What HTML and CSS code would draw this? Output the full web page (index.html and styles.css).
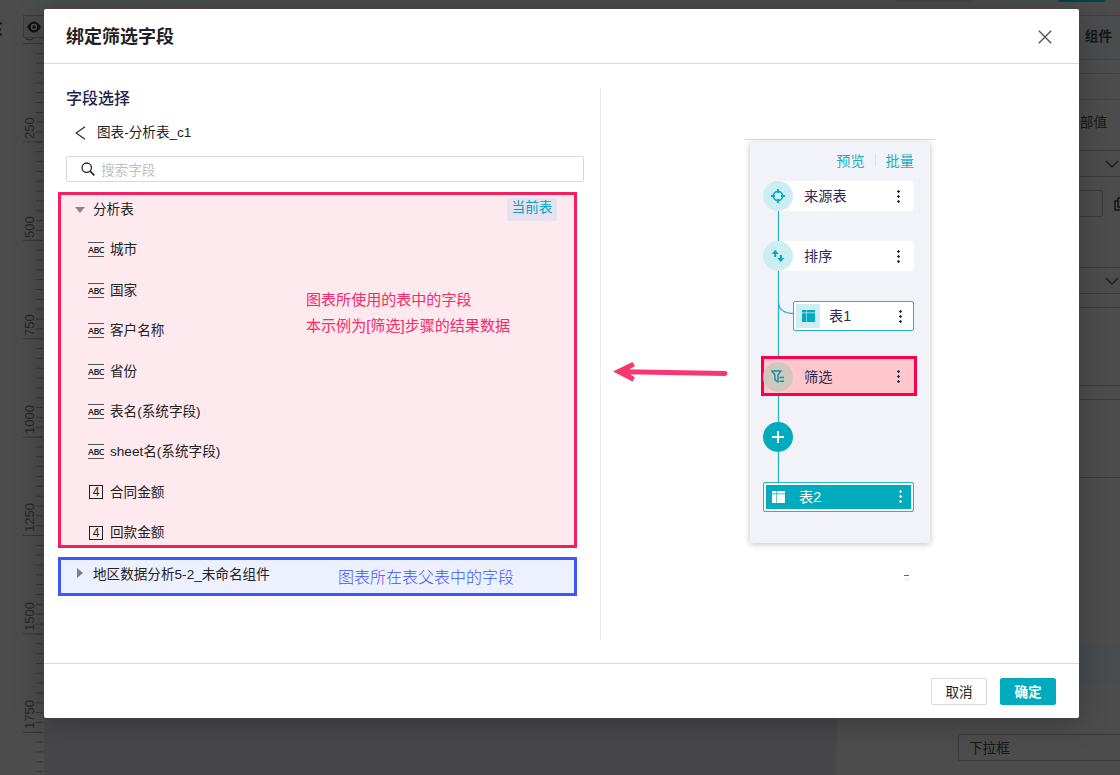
FILE: index.html
```
<!DOCTYPE html>
<html lang="zh-CN">
<head>
<meta charset="UTF-8">
<meta name="viewport" content="width=device-width, initial-scale=1.0">
<title>绑定筛选字段</title>
<link rel="stylesheet" href="styles.css">
</head>
<body>
    <!-- Editor page behind the dialog -->
    <div class="page">
        <div class="toolbar">
            <span class="tool t1"></span>
            <span class="tool t2"></span>
            <span class="tool t3"></span>
            <span class="tool t4"></span>
            <span class="tool t5"></span>
            <span class="tool t6"></span>
        </div>
        <div class="workspace">
            <svg class="ruler" width="44" height="760" viewBox="0 15 44 760">
                <defs>
                    <pattern id="minor" x="0" y="43" width="44" height="9.84" patternUnits="userSpaceOnUse">
                        <path d="M36 0.5H43" stroke="#353535"/>
                    </pattern>
                    <pattern id="major" x="0" y="43" width="44" height="98.4" patternUnits="userSpaceOnUse">
                        <path d="M23 0.5H43" stroke="#353535"/>
                    </pattern>
                </defs>
                <rect x="0" y="43" width="44" height="732" fill="url(#minor)"/>
                <rect x="0" y="43" width="44" height="732" fill="url(#major)"/>
                <g class="ruler-text">
                    <text transform="translate(34 139) rotate(-90)">250</text>
                    <text transform="translate(34 238) rotate(-90)">500</text>
                    <text transform="translate(34 336) rotate(-90)">750</text>
                    <text transform="translate(34 434) rotate(-90)">1000</text>
                    <text transform="translate(34 532) rotate(-90)">1250</text>
                    <text transform="translate(34 631) rotate(-90)">1500</text>
                    <text transform="translate(34 729) rotate(-90)">1750</text>
                </g>
                <path d="M25.500 38.500q3.500 3 8 0" fill="none" stroke="#222"/>
                <rect x="23.500" y="15.500" width="24" height="22" fill="#4a4a4a" stroke="#3b3b3b"/>
                <path d="M27 27q7-11 14 0q-7 11-14 0z" fill="#111"/>
                <circle cx="34" cy="27" r="2.500" fill="none" stroke="#555" stroke-width="1.300"/>
                <path d="M0 23.500H2M0 29.500H1M0 34.500H2" stroke="#12122a" stroke-width="2"/>
            </svg>
            <div class="canvas"></div>
            <div class="panel">
                <div class="panel-title">组件</div>
                <div class="panel-line"></div>
                <div class="panel-line short"></div>
                <div class="panel-label">全部值</div>
                <div class="panel-select">
                    <svg width="14" height="8" viewBox="0 0 14 8"><path d="M1 1l6 6 6-6" fill="none" stroke="#1c1c1c" stroke-width="1.300"/></svg>
                </div>
                <div class="panel-row">
                    <div class="panel-input"></div>
                    <svg width="14" height="14" viewBox="0 0 14 14"><path d="M4 1H13V10H4zM4 4H1V13H10V10" fill="none" stroke="#161616" stroke-width="1.500"/></svg>
                </div>
                <div class="panel-select">
                    <svg width="14" height="8" viewBox="0 0 14 8"><path d="M1 1l6 6 6-6" fill="none" stroke="#1c1c1c" stroke-width="1.300"/></svg>
                </div>
                <div class="panel-group"></div>
                <div class="panel-group"></div>
                <div class="panel-strip"></div>
                <div class="panel-dropdown">下拉框</div>
            </div>
        </div>
    </div>

    <div class="dialog">
        <div class="dialog-header">
            <span class="dialog-title">绑定筛选字段</span>
            <svg class="close" width="14" height="14" viewBox="0 0 14 14"><path d="M0.800 0.800L13.200 13.200M13.200 0.800L0.800 13.200" stroke="#555" stroke-width="1.400"/></svg>
        </div>
        <div class="dialog-body">
            <div class="fields">
                <div class="fields-title">字段选择</div>
                <div class="back">
                    <svg width="11" height="14" viewBox="0 0 11 14"><path d="M10 0.700L1.200 7L10 13.300" fill="none" stroke="#333" stroke-width="1.300"/></svg>
                    <span>图表-分析表_c1</span>
                </div>
                <div class="search">
                    <svg width="14" height="14" viewBox="0 0 14 14"><circle cx="5.700" cy="5.700" r="4.700" fill="none" stroke="#222" stroke-width="1.300"/><path d="M9 9l4.300 4.300" stroke="#222" stroke-width="1.700"/></svg>
                    <span>搜索字段</span>
                </div>

                <div class="group current">
                    <div class="group-head">
                        <span class="caret down"></span>
                        <span>分析表</span>
                        <span class="tag">当前表</span>
                    </div>
                    <div class="field"><span class="abc">ABC</span>城市</div>
                    <div class="field"><span class="abc">ABC</span>国家</div>
                    <div class="field"><span class="abc">ABC</span>客户名称</div>
                    <div class="field"><span class="abc">ABC</span>省份</div>
                    <div class="field"><span class="abc">ABC</span>表名(系统字段)</div>
                    <div class="field"><span class="abc">ABC</span>sheet名(系统字段)</div>
                    <div class="field"><span class="num">4</span>合同金额</div>
                    <div class="field"><span class="num">4</span>回款金额</div>
                    <div class="note note-current">图表所使用的表中的字段<br>本示例为[筛选]步骤的结果数据</div>
                </div>

                <div class="group parent">
                    <div class="group-head">
                        <span class="caret right"></span>
                        <span>地区数据分析5-2_未命名组件</span>
                    </div>
                    <div class="note note-parent">图表所在表父表中的字段</div>
                </div>
            </div>

            <div class="preview">
                <div class="steps-wrap">
                    <div class="steps">
                        <svg class="links" width="180" height="401" viewBox="0 0 180 401">
                            <path d="M28.500 60V350M28.500 160Q29 171.500 44 171.500" fill="none" stroke="#25b5c6" stroke-width="1.300"/>
                        </svg>
                        <div class="steps-actions"><span>预览</span><i></i><span>批量</span></div>

                        <div class="step">
                            <span class="step-icon">
                                <svg width="14" height="14" viewBox="0 0 14 14"><circle cx="7" cy="7" r="4.600" fill="none" stroke="#00abbe" stroke-width="1.700"/><path d="M7 0V4M7 10V14M0 7H4M10 7H14" stroke="#00abbe" stroke-width="1.900"/></svg>
                            </span>
                            <span class="step-name">来源表</span>
                            <span class="more"></span>
                        </div>
                        <div class="step">
                            <span class="step-icon">
                                <svg width="14" height="14" viewBox="0 0 14 14"><path d="M4.200 0.800L0.800 5H3.200V8H5.200V5H7.600zM9.800 13.200L6.400 9H8.800V6H10.800V9H13.200z" fill="#00abbe"/></svg>
                            </span>
                            <span class="step-name">排序</span>
                            <span class="more"></span>
                        </div>
                        <div class="step table">
                            <span class="table-icon">
                                <svg width="13" height="12" viewBox="0 0 13 12"><path d="M0 0H4V2.500H0zM4.600 0H13V2.500H4.600zM0 3.200H4V12H0zM4.600 3.200H13V12H4.600z" fill="#00abbe"/></svg>
                            </span>
                            <span class="step-name">表1</span>
                            <span class="more"></span>
                        </div>
                        <div class="step active">
                            <span class="step-icon">
                                <svg width="14" height="13" viewBox="0 0 14 13"><path d="M0.800 1H9.800L7 5V12L4 10V5zM8.500 7.500H13M8.500 11.300H13" fill="none" stroke="#168f9c" stroke-width="1.400"/></svg>
                            </span>
                            <span class="step-name">筛选</span>
                            <span class="more"></span>
                        </div>
                        <div class="step plus">
                            <span class="step-icon">
                                <svg width="14" height="14" viewBox="0 0 14 14"><path d="M7 1V13M1 7H13" stroke="#fff" stroke-width="2"/></svg>
                            </span>
                        </div>
                        <div class="step result">
                            <svg width="13" height="12" viewBox="0 0 13 12"><path d="M0 0H4V2.500H0zM4.600 0H13V2.500H4.600zM0 3.200H4V12H0zM4.600 3.200H13V12H4.600z" fill="#fff"/></svg>
                            <span class="step-name">表2</span>
                            <span class="more"></span>
                        </div>
                        <div class="step-frame"></div>
                    </div>
                </div>
                <svg class="arrow" width="116" height="22" viewBox="0 0 116 22">
                    <path d="M12 10.700L112 12.400" stroke="#f8366f" stroke-width="5" stroke-linecap="round"/>
                    <path d="M0 10.500L19.500 1L22 5L17 8V13L22 16.500L19.500 20.500z" fill="#f8366f"/>
                </svg>
                <span class="dash"></span>
            </div>
        </div>
        <div class="dialog-footer">
            <button class="btn">取消</button>
            <button class="btn primary">确定</button>
        </div>
    </div>
</body>
</html>
```
FILE: styles.css
```
* {
    box-sizing: border-box;
}
body {
    margin: 0;
    width: 1120px;
    height: 775px;
    overflow: hidden;
    position: relative;
    font-family: "Liberation Sans", "Noto Sans CJK SC", sans-serif;
    font-size: 13.6px;
    color: #222;
}
svg {
    display: block;
    flex: none;
}

/* Dimmed page */
.page {
    height: 775px;
    overflow: hidden;
    background: #4c4c4c;
}
.toolbar {
    display: flex;
    height: 15px;
    padding-left: 37px;
}
.tool {
    height: 2px;
    width: 46px;
    background: #425051;
    border-radius: 0 0 2px 2px;
}
.t2, .t3 {
    margin-left: 14px;
}
.t4 {
    width: 77px;
    margin-left: 692px;
    background: #434343;
}
.t5 {
    margin-left: 34px;
}
.t6 {
    width: 47px;
    margin-left: 6px;
    background: #00444c;
}
.workspace {
    display: flex;
    height: 760px;
}
.ruler-text {
    font-size: 13px;
    fill: #272727;
}
.canvas {
    width: 793px;
    background: #474749;
}
.panel {
    width: 283px;
    border-top: 1px solid #404040;
    color: #171717;
}
.panel-title {
    height: 43px;
    padding: 0 8px 0 0;
    line-height: 41px;
    text-align: right;
    font-weight: bold;
    background: #4a4c4d;
}
.panel-line {
    height: 15px;
    border: 1px solid #414141;
    border-width: 1px 0;
}
.panel-line.short {
    height: 26px;
    border-top: 0;
}
.panel-label {
    height: 50px;
    padding-right: 13px;
    line-height: 46px;
    text-align: right;
}
.panel-select {
    display: flex;
    justify-content: flex-end;
    align-items: center;
    height: 27px;
    padding-right: 1px;
    border: 1px solid #3b3b3b;
    border-width: 1px 0;
}
.panel-row {
    display: flex;
    align-items: center;
    height: 90px;
    padding-bottom: 37px;
}
.panel-input {
    flex: none;
    width: 266px;
    height: 27px;
    margin-right: 11px;
    border: 1px solid #3b3b3b;
    border-radius: 2px;
}
.panel-group {
    height: 79px;
    margin-top: 13px;
    border: 1px solid #3b3b3b;
    border-width: 1px 0;
}
.panel-strip {
    height: 41px;
    margin-top: 166px;
    background: #484c4e;
}
.panel-dropdown {
    height: 27px;
    margin: 49px 0 0 121px;
    padding-left: 10px;
    line-height: 27px;
    border: 1px solid #3b3b3b;
    border-right: 0;
    border-radius: 2px 0 0 2px;
}

/* Dialog */
.dialog {
    position: absolute;
    left: 44px;
    top: 9px;
    display: flex;
    flex-direction: column;
    width: 1035px;
    height: 709px;
    background: #fff;
    border-radius: 2px;
    box-shadow: 0 4px 30px rgba(0, 0, 0, 0.25);
}
.dialog-header {
    display: flex;
    justify-content: space-between;
    align-items: center;
    height: 55px;
    padding: 0 27px 0 22px;
    border-bottom: 1px solid #d9d9d9;
    font-size: 18px;
    font-weight: bold;
}
.dialog-title {
    padding-bottom: 2px;
}
.close {
    margin-top: 2px;
}
.dialog-body {
    display: flex;
    height: 599px;
    padding-top: 24px;
}
.dialog-footer {
    display: flex;
    justify-content: flex-end;
    gap: 13px;
    height: 55px;
    padding: 14px 23px 0 0;
    border-top: 1px solid #d9d9d9;
}
.btn {
    width: 56px;
    height: 27px;
    padding: 0 0 2px;
    background: #fff;
    border: 1px solid #d9d9d9;
    border-radius: 2px;
    font: inherit;
    color: #222;
}
.btn.primary {
    background: #00abbe;
    border-color: #00abbe;
    color: #fff;
    font-weight: bold;
}

/* Field list */
.fields {
    width: 557px;
    height: 552px;
    padding-left: 14px;
    border-right: 1px solid #ececec;
}
.fields-title {
    height: 20px;
    margin-left: 8px;
    line-height: 22px;
    font-size: 16px;
    font-weight: 500;
    color: #1f2550;
}
.back {
    display: flex;
    align-items: center;
    gap: 11px;
    height: 24px;
    margin: 12px 0 12px 17px;
}
.back svg {
    margin-top: 2px;
}
.back span {
    padding-bottom: 2px;
}
.search {
    display: flex;
    align-items: center;
    gap: 6px;
    width: 518px;
    height: 26px;
    margin-left: 8px;
    padding-left: 14px;
    border: 1px solid #d9d9d9;
    border-radius: 2px;
    color: #bfbfbf;
}
.group {
    position: relative;
    width: 519px;
    overflow: hidden;
}
.current {
    height: 356px;
    margin-top: 10px;
    border: 3px solid #f71e60;
    background: #fee9ef;
}
.parent {
    height: 39px;
    margin-top: 9px;
    border: 3px solid #4056fb;
    background: #ecf0ff;
}
.group-head {
    display: flex;
    align-items: center;
    height: 27px;
    margin-bottom: 7px;
    padding: 0 17px 2px 14px;
}
.caret {
    width: 18px;
}
.caret::before {
    content: "";
    display: block;
    width: 0;
    height: 0;
}
.caret.down::before {
    margin-top: 4px;
    border: 5px solid transparent;
    border-top: 6px solid #8d8380;
    border-bottom: 0;
}
.caret.right::before {
    margin: 1px 0 0 2px;
    border: 5px solid transparent;
    border-left: 6px solid #84798a;
    border-right: 0;
}
.tag {
    width: 50px;
    height: 23px;
    margin: 3px 0 0 auto;
    line-height: 20px;
    text-align: center;
    background: #e7e1f0;
    border-radius: 2px;
    color: #00a4b8;
}
.field {
    display: flex;
    align-items: center;
    height: 40.45px;
    padding: 0 0 2px 27px;
}
.abc {
    width: 16px;
    height: 15px;
    margin: 3px 6px 0 0;
    border: 1px solid #555;
    border-width: 1px 0;
    line-height: 14px;
    text-align: center;
    font-family: "Open Sans", sans-serif;
    font-size: 9px;
    font-weight: 600;
    letter-spacing: -0.6px;
}
.num {
    width: 14px;
    height: 14px;
    margin: 3px 7px 0 1px;
    border: 1px solid #222;
    line-height: 13px;
    text-align: center;
    font-size: 12px;
}
.note {
    position: absolute;
    white-space: nowrap;
}
.note-current {
    left: 245px;
    top: 92px;
    line-height: 26px;
    font-size: 15.05px;
    color: #f82a68;
}
.note-parent {
    left: 277px;
    top: 6px;
    line-height: 24px;
    font-size: 16px;
    font-weight: 300;
    color: #4056fb;
}

/* Step flow preview */
.preview {
    position: relative;
    flex: 1;
    padding: 51px 0 0 143px;
}
.steps-wrap {
    width: 192px;
    padding: 2px 6px;
    border-top: 1px solid #dcdcdc;
}
.steps {
    position: relative;
    width: 180px;
    height: 401px;
    padding: 9px 16px 0 13px;
    background: #f2f3f8;
    box-shadow: 0 1px 6px rgba(0, 0, 0, 0.25);
    color: #2b2c55;
    font-size: 14.2px;
}
.links {
    position: absolute;
    left: 0;
    top: 0;
}
.steps-actions {
    display: flex;
    justify-content: flex-end;
    align-items: center;
    gap: 10px;
    height: 18px;
    margin-bottom: 12px;
    color: #1aafc0;
}
.steps-actions i {
    width: 1px;
    height: 12px;
    background: #e0e2e8;
}
.step {
    position: relative;
    display: flex;
    align-items: center;
    height: 30px;
    margin-bottom: 30.2px;
    background: linear-gradient(to right, transparent 15px, #fff 15px);
    border-radius: 2px;
}
.step-name {
    padding-bottom: 2px;
}
.step-icon {
    display: flex;
    justify-content: center;
    align-items: center;
    width: 30px;
    height: 30px;
    margin-right: 11px;
    border-radius: 50%;
    background: #cceef2;
}
.more {
    width: 3px;
    height: 13px;
    margin: 0 14px 0 auto;
    background: radial-gradient(circle at 1.5px 1.5px, currentColor 1px, transparent 1.5px) 0 0 / 3px 5px;
}
.table {
    margin-left: 30px;
    padding-left: 2px;
    background: #fff;
    border: 1px solid #25b5c6;
}
.table-icon {
    display: flex;
    justify-content: center;
    align-items: center;
    width: 24px;
    height: 24px;
    margin-right: 9px;
    background: #cceef2;
    border-radius: 2px;
}
.table .more {
    margin-right: 11px;
}
.active {
    z-index: 2;
    background: none;
}
.active .step-icon {
    background: #cfc8bf;
}
.plus {
    background: none;
}
.plus .step-icon {
    background: #00abbe;
}
.result {
    padding-left: 8px;
    background: #00abbe;
    border: 1px solid #25b5c6;
    box-shadow: inset 0 0 0 2px #fff;
    color: #fff;
}
.result .step-name {
    margin-left: 14px;
}
.result .more {
    margin-right: 11px;
}
/* Highlight drawn under the active step's icon and name */
.step-frame {
    position: absolute;
    left: 11px;
    top: 214px;
    z-index: 1;
    width: 156px;
    height: 40px;
    border: 3px solid #f9004f;
    background: #ffc7cc;
}
.arrow {
    position: absolute;
    left: 12px;
    top: 273px;
}
.dash {
    position: absolute;
    left: 303px;
    top: 487px;
    width: 5px;
    height: 1px;
    background: #4056fb;
    box-shadow: 0 4px 3px rgba(0, 0, 0, 0.2);
}
```
